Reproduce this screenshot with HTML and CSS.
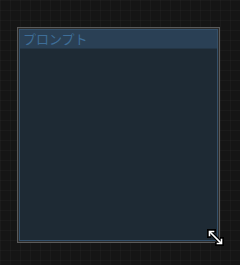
FILE: index.html
```html
<!DOCTYPE html>
<html>
<head>
<meta charset="utf-8">
<link rel="stylesheet" href="styles.css">
</head>
<body>
<div class="canvas">
  <div class="node">
    <div class="node-inner">
      <div class="header">プロンプト</div>
      <div class="content"></div>
    </div>
    <svg class="resize" width="17" height="17" viewBox="0 0 17 17">
      <g stroke="#000" stroke-width="4" stroke-linecap="square" fill="none">
        <path d="M3 3 L14 14"/>
        <path d="M2 2 L7 2 M2 2 L2 7"/>
        <path d="M15 15 L10 15 M15 15 L15 10"/>
      </g>
      <g stroke="#fff" stroke-width="1.6" stroke-linecap="square" fill="none">
        <path d="M3 3 L14 14"/>
        <path d="M2.5 2.5 L6.5 2.5 M2.5 2.5 L2.5 6.5"/>
        <path d="M14.5 14.5 L10.5 14.5 M14.5 14.5 L14.5 10.5"/>
      </g>
    </svg>
  </div>
</div>
</body>
</html>
```
FILE: styles.css
```css
html, body {
  margin: 0;
  padding: 0;
}
body {
  width: 240px;
  height: 265px;
  overflow: hidden;
  background-color: #151515;
  background-image:
    linear-gradient(to right, rgba(255,255,255,0.025) 1px, transparent 1px),
    linear-gradient(to bottom, rgba(255,255,255,0.025) 1px, transparent 1px);
  background-size: 10px 10px;
}
.canvas {
  padding: 27px 0 0 17px;
}
.node {
  position: relative;
  width: 203px;
  height: 216px;
  box-sizing: border-box;
  border: 1px solid #5a5a5a;
  background: #2b2b2b;
  padding: 1px;
}
.node-inner {
  box-sizing: border-box;
  height: 100%;
  border: 1px solid #34506a;
  background: #1e2a34;
  display: flex;
  flex-direction: column;
}
.header {
  height: 18px;
  background: #2a4055;
  color: #3e6e98;
  font-family: "Noto Sans CJK JP", sans-serif;
  font-size: 13px;
  line-height: 18px;
  padding-left: 3px;
  border-bottom: 1px solid #243646;
}
.content {
  flex: 1;
}
.resize {
  position: absolute;
  right: -5px;
  bottom: -4px;
}
```
